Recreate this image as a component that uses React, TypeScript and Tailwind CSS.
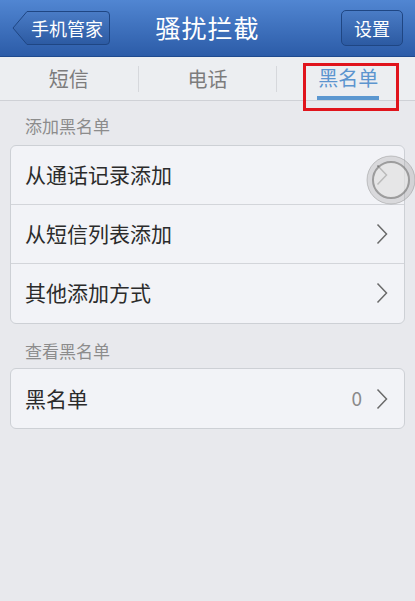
const font = { fontFamily: '"Noto Sans CJK SC", "Liberation Sans", sans-serif' };

const Chevron = () => (
  <svg width="12" height="22" viewBox="0 0 12 22" className="shrink-0">
    <polyline points="1.5,1.5 10.5,11 1.5,20.5" fill="none" stroke="#6a6a6a" strokeWidth="1.5" />
  </svg>
);

const Row = ({ label, value, last }: { label: string; value?: string; last?: boolean }) => (
  <div
    className={`flex h-[59px] items-center justify-between pl-[14px] pr-[16px] ${
      last ? '' : 'border-b border-[#d3d5da]'
    }`}
  >
    <span className="text-[21px] text-[#2b2b2b]">{label}</span>
    <div className="flex items-center gap-[14px]">
      {value && <span className="text-[19px] text-[#8a8a8a]">{value}</span>}
      <Chevron />
    </div>
  </div>
);

const App = () => {
  return (
    <div className="relative h-[601px] w-[415px] overflow-hidden bg-[#e8e9ed]" style={font}>
      {/* 顶部导航 */}
      <div className="flex h-[57px] items-center border-b border-[#1e4a8f] bg-gradient-to-b from-[#5186d2] to-[#2c5ca8] px-[12px]">
        <div className="flex flex-1 justify-start">
          <button type="button" className="relative flex h-[36px] w-[99px] items-center justify-end pr-[8px]">
            <svg className="absolute inset-0" width="99" height="36" viewBox="0 0 99 36">
              <defs>
                <linearGradient id="bk" x1="0" y1="0" x2="0" y2="1">
                  <stop offset="0" stopColor="#4a7cc6" />
                  <stop offset="1" stopColor="#2c5aa2" />
                </linearGradient>
              </defs>
              <path
                d="M1 18 L15 1.5 H94 Q97.5 1.5 97.5 5 V31 Q97.5 34.5 94 34.5 H15 Z"
                fill="url(#bk)"
                stroke="#1f4683"
                strokeWidth="1"
              />
            </svg>
            <span className="relative text-[18px] text-white">手机管家</span>
          </button>
        </div>
        <h1 className="text-[25px] font-normal tracking-[1px] text-white">骚扰拦截</h1>
        <div className="flex flex-1 justify-end">
          <button
            type="button"
            className="flex h-[36px] w-[62px] items-center justify-center rounded-[5px] border border-[#1f4683] bg-gradient-to-b from-[#4a7cc6] to-[#2c5aa2] text-[18px] text-white"
          >
            设置
          </button>
        </div>
      </div>

      {/* 标签栏 */}
      <div className="flex h-[44px] items-center border-b border-[#cfd1d6] bg-[#eceef1]">
        <div className="flex flex-1 items-center justify-center text-[20px] text-[#7c7c7c]">短信</div>
        <div className="h-[26px] w-px bg-[#d6d8dc]" />
        <div className="flex flex-1 items-center justify-center text-[20px] text-[#7c7c7c]">电话</div>
        <div className="h-[26px] w-px bg-[#d6d8dc]" />
        <div className="flex flex-1 items-center justify-center">
          <div className="flex translate-x-[2px] flex-col items-center pt-[6px]">
            <span className="text-[20px] leading-[28px] text-[#5c95cf]">黑名单</span>
            <div className="mt-[4px] h-[4px] w-[62px] bg-[#5b97d0]" />
          </div>
        </div>
      </div>

      {/* 标注框 */}
      <div className="absolute left-[303px] top-[63px] h-[48px] w-[96px] border-[3px] border-[#e0141c]" />

      <div className="px-[10px]">
        <div className="pb-[6px] pl-[15px] pt-[12px] text-[17px] text-[#8c8c8c]">添加黑名单</div>
        <div className="overflow-hidden rounded-[6px] border border-[#cdd0d5] bg-[#f2f3f7]">
          <Row label="从通话记录添加" />
          <Row label="从短信列表添加" />
          <Row label="其他添加方式" last />
        </div>

        <div className="pb-[5px] pl-[15px] pt-[14px] text-[17px] text-[#8c8c8c]">查看黑名单</div>
        <div className="overflow-hidden rounded-[6px] border border-[#cdd0d5] bg-[#f2f3f7]">
          <Row label="黑名单" value="0" last />
        </div>
      </div>

      {/* 悬浮触控按钮 */}
      <svg className="absolute left-[365px] top-[154px]" width="52" height="52" viewBox="0 0 52 52">
        <circle cx="26" cy="26" r="24" fill="rgba(160,160,160,0.3)" stroke="rgba(140,140,140,0.45)" strokeWidth="1" />
        <circle cx="26" cy="26" r="18" fill="rgba(240,240,240,0.55)" stroke="rgba(120,120,120,0.65)" strokeWidth="2" />
      </svg>
    </div>
  );
};

export default App;
